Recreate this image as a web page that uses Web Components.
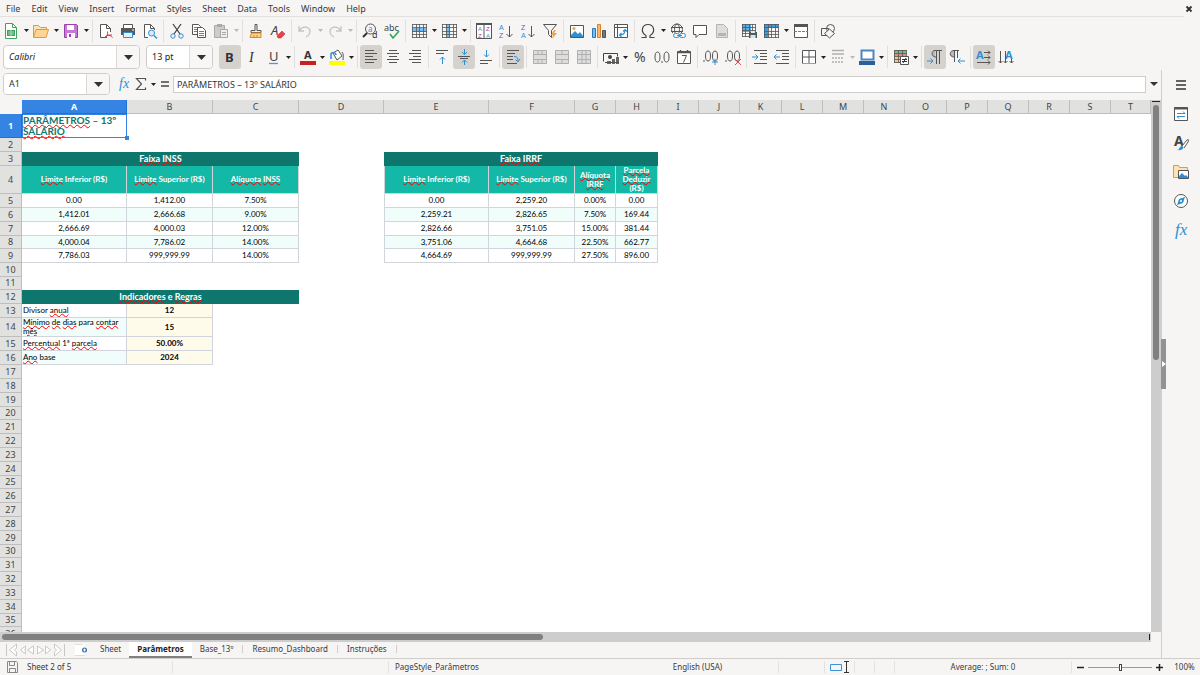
<!DOCTYPE html>
<html lang="en">
<head>
<meta charset="utf-8">
<title>Parâmetros – Calc</title>
<style>
  html, body { margin: 0; height: 100%; }
  body { background: #f6f5f4; color: #3a3a3a; font: 9px/12px "Noto Sans", sans-serif; overflow: hidden; }
</style>
</head>
<body>
<calc-app></calc-app>

<template id="t-app">
  <style>
    :host { display: flex; flex-direction: column; height: 100vh; }
    .middle { flex: 1; min-height: 0; display: flex; }
    .work { flex: 1; min-width: 0; display: flex; flex-direction: column; border-right: 1px solid #d0cfcd; }
    .format { height: 26px; --arrow: 7px; }
    calc-sheet { flex: 1; min-height: 0; }
  </style>
  <menu-bar></menu-bar>
  <tool-bar>
    <tool-button icon="new" label="New" menu></tool-button>
    <tool-button icon="open" label="Open" menu></tool-button>
    <tool-button icon="save" label="Save" menu></tool-button>
    <tool-sep></tool-sep>
    <tool-button icon="pdf" label="Export as PDF"></tool-button>
    <tool-button icon="print" label="Print"></tool-button>
    <tool-button icon="preview" label="Print Preview"></tool-button>
    <tool-sep></tool-sep>
    <tool-button icon="cut" label="Cut"></tool-button>
    <tool-button icon="copy" label="Copy"></tool-button>
    <tool-button icon="paste" label="Paste" menu disabled></tool-button>
    <tool-sep></tool-sep>
    <tool-button icon="clone" label="Clone Formatting"></tool-button>
    <tool-button icon="clear" label="Clear Direct Formatting"></tool-button>
    <tool-sep></tool-sep>
    <tool-button icon="undo" label="Undo" menu disabled></tool-button>
    <tool-button icon="redo" label="Redo" menu disabled></tool-button>
    <tool-sep></tool-sep>
    <tool-button icon="find" label="Find and Replace"></tool-button>
    <tool-button icon="spell" label="Spelling"></tool-button>
    <tool-sep></tool-sep>
    <tool-button icon="row" label="Row" menu></tool-button>
    <tool-button icon="column" label="Column" menu></tool-button>
    <tool-sep></tool-sep>
    <tool-button icon="sort" label="Sort"></tool-button>
    <tool-button icon="asc" label="Sort Ascending"></tool-button>
    <tool-button icon="desc" label="Sort Descending"></tool-button>
    <tool-button icon="filter" label="AutoFilter"></tool-button>
    <tool-sep></tool-sep>
    <tool-button icon="image" label="Insert Image"></tool-button>
    <tool-button icon="chart" label="Insert Chart"></tool-button>
    <tool-button icon="pivot" label="Insert Pivot Table"></tool-button>
    <tool-sep></tool-sep>
    <tool-button icon="omega" label="Special Character" menu></tool-button>
    <tool-button icon="link" label="Insert Hyperlink"></tool-button>
    <tool-button icon="comment" label="Insert Comment"></tool-button>
    <tool-button icon="header" label="Headers and Footers" disabled></tool-button>
    <tool-sep></tool-sep>
    <tool-button icon="range" label="Define Print Area"></tool-button>
    <tool-button icon="freeze" label="Freeze Rows and Columns" menu></tool-button>
    <tool-button icon="split" label="Split Window"></tool-button>
    <tool-sep></tool-sep>
    <tool-button icon="shapes" label="Show Draw Functions"></tool-button>
  </tool-bar>
  <tool-bar class="format">
    <combo-box class="font" label="Font Name" value="Calibri"></combo-box>
    <combo-box class="size" label="Font Size" value="13 pt"></combo-box>
    <tool-button icon="bold" label="Bold" active></tool-button>
    <tool-button icon="italic" label="Italic"></tool-button>
    <tool-button icon="underline" label="Underline" menu></tool-button>
    <tool-sep></tool-sep>
    <tool-button icon="color" label="Font Color" menu></tool-button>
    <tool-button icon="fill" label="Background Color" menu></tool-button>
    <tool-sep></tool-sep>
    <tool-button icon="left" label="Align Left" active></tool-button>
    <tool-button icon="center" label="Center Horizontally"></tool-button>
    <tool-button icon="right" label="Align Right"></tool-button>
    <tool-sep></tool-sep>
    <tool-button icon="top" label="Align Top"></tool-button>
    <tool-button icon="middle" label="Center Vertically" active></tool-button>
    <tool-button icon="bottom" label="Align Bottom"></tool-button>
    <tool-sep></tool-sep>
    <tool-button icon="wrap" label="Wrap Text" active></tool-button>
    <tool-sep></tool-sep>
    <tool-button icon="merge1" label="Merge and Center Cells" disabled></tool-button>
    <tool-button icon="merge2" label="Merge Cells" disabled></tool-button>
    <tool-button icon="merge3" label="Unmerge Cells" disabled></tool-button>
    <tool-sep></tool-sep>
    <tool-button icon="currency" label="Format as Currency" menu></tool-button>
    <tool-button icon="percent" label="Format as Percent"></tool-button>
    <tool-button icon="number" label="Format as Number"></tool-button>
    <tool-button icon="date" label="Format as Date"></tool-button>
    <tool-sep></tool-sep>
    <tool-button icon="adddec" label="Add Decimal Place"></tool-button>
    <tool-button icon="deldec" label="Delete Decimal Place"></tool-button>
    <tool-sep></tool-sep>
    <tool-button icon="indent" label="Increase Indent"></tool-button>
    <tool-button icon="outdent" label="Decrease Indent"></tool-button>
    <tool-sep></tool-sep>
    <tool-button icon="borders" label="Borders" menu></tool-button>
    <tool-button icon="bstyle" label="Border Style" menu disabled></tool-button>
    <tool-button icon="bcolor" label="Border Color" menu></tool-button>
    <tool-sep></tool-sep>
    <tool-button icon="cond" label="Conditional Formatting" menu></tool-button>
    <tool-sep></tool-sep>
    <tool-button icon="ltr" label="Left-To-Right" active></tool-button>
    <tool-button icon="rtl" label="Right-To-Left"></tool-button>
    <tool-sep></tool-sep>
    <tool-button icon="horiz" label="Text direction from left to right" active></tool-button>
    <tool-button icon="vert" label="Text direction from top to bottom"></tool-button>
  </tool-bar>
  <div class="middle">
    <div class="work">
      <formula-bar></formula-bar>
      <calc-sheet></calc-sheet>
      <sheet-tabs></sheet-tabs>
    </div>
    <side-bar></side-bar>
  </div>
  <status-bar></status-bar>
</template>

<template id="t-menu">
  <style>
    :host { display: flex; justify-content: space-between; align-items: center; height: 16px; margin-right: 16px; border-bottom: 1px solid #e2e1df; padding-left: 6px; }
    nav { display: flex; gap: 11px; padding-top: 1px; }
    button { all: unset; }
    .close { margin-right: -10px; width: 10px; height: 16px; }
    svg { display: block; margin: 5px 1px; }
  </style>
  <nav>
    <button>File</button><button>Edit</button><button>View</button><button>Insert</button><button>Format</button><button>Styles</button><button>Sheet</button><button>Data</button><button>Tools</button><button>Window</button><button>Help</button>
  </nav>
  <button class="close" aria-label="Close Document"><svg width="8" height="8" viewBox="0 0 8 8"><path d="M1.500 1.500L6.500 6.500M6.500 1.500L1.500 6.500" stroke="#333" stroke-width="1.900"/></svg></button>
</template>

<template id="t-toolbar">
  <style>
    :host { display: flex; align-items: center; height: 27px; }
    ::slotted(*) { flex: none; }
  </style>
  <slot></slot>
</template>

<template id="t-formula">
  <style>
    :host { display: flex; align-items: center; height: 30px; box-sizing: border-box; padding-bottom: 2px; }
    .name { display: flex; width: 105px; height: 20px; margin: 0 7px 0 3px; border: 1px solid #cfcdca; border-radius: 4px; background: #fff; overflow: hidden; }
    input { font: inherit; color: #333; border: 0; outline: 0; padding: 0 5px; min-width: 0; background: #fff; }
    .name input { flex: 1; }
    .name button { width: 23px; border-left: 1px solid #dcdad8; background: #f8f7f6; }
    button { all: unset; display: flex; align-items: center; justify-content: center; box-sizing: border-box; }
    .line { flex: 1; min-width: 0; height: 17px; box-sizing: border-box; border: 1px solid #cfcdca; padding: 0 3px; }
    .tool { width: 16px; height: 20px; }
    .small { width: 8px; }
    .eq { width: 16px; }
    .drop { width: 15px; }
  </style>
  <div class="name"><input aria-label="Name Box" value="A1"><button aria-label="Named ranges"><svg width="9" height="5"><path d="M0 0h9L4.500 5z" fill="#333"/></svg></button></div>
  <button class="tool" aria-label="Function Wizard"><calc-icon name="fx"></calc-icon></button>
  <button class="tool" aria-label="Select Function"><calc-icon name="sigma"></calc-icon></button>
  <button class="small" aria-label="More functions"><svg width="5" height="3"><path d="M0 0h5L2.500 3z" fill="#222"/></svg></button>
  <button class="eq" aria-label="Formula"><svg width="8" height="6"><path d="M0 1h8M0 5h8" stroke="#444" stroke-width="1.500"/></svg></button>
  <input class="line" aria-label="Input line" value="PARÂMETROS – 13º SALÁRIO">
  <button class="drop" aria-label="Expand Formula Bar"><svg width="8" height="4"><path d="M0 0h8L4 4z" fill="#333"/></svg></button>
</template>

<template id="t-sheet">
  <style>
    :host { display: grid; grid-template: minmax(0, 1fr) 10px / minmax(0, 1fr) 10px; background: #fff; }
    .view { overflow: hidden; }
    table { border-collapse: separate; border-spacing: 0; table-layout: fixed; width: 100%; min-width: 1111px; font-family: Lato, sans-serif; color: #000; }
    tr { height: 14px; }
    tr.short { height: 13px; }
    tr.title { height: 24px; }
    tr.heads { height: 27px; }
    tr.two { height: 18px; }
    th, td { padding: 0; box-sizing: border-box; overflow: hidden; }
    thead th, tbody th { font: 9px/10px "Noto Sans", sans-serif; color: #444; background: #e1e1e0; border-right: 1px solid #bebebd; border-bottom: 1px solid #bebebd; }
    thead th:first-child { background: #f6f5f4; border-color: #f6f5f4; }
    th.on, thead th.on { background: #3584e4; color: #fff; font-weight: bold; border-color: #1c71d8; }
    td { font-size: 8px; line-height: 9px; text-align: center; vertical-align: middle; }
    td.name { position: relative; overflow: visible; text-align: left; padding-left: 1px; color: #0f766e; font-size: 10px; line-height: 11px; font-weight: bold; outline: 1px solid #3584e4; outline-offset: -1px; }
    td.name::after { content: ""; position: absolute; right: -2px; bottom: -2px; width: 4px; height: 4px; background: #3584e4; }
    td.band { background: #0f766e; color: #fff; font-size: 9px; line-height: 10px; font-weight: bold; padding-bottom: 1px; }
    td.head { background: #14b8a6; color: #fff; font-weight: bold; }
    td.head, td.cell, td.key, td.val { border-right: 1px solid #d1d5db; border-bottom: 1px solid #d1d5db; }
    td.cell:nth-of-type(5), td.head:nth-of-type(5) { border-left: 1px solid #d1d5db; }
    td.key { text-align: left; padding-left: 1px; }
    td.val { background: #fffbeb; font-weight: bold; }
    td.alt { background: #f0fdfa; }
    u { text-decoration: underline wavy #f00 1px; text-decoration-skip-ink: none; text-underline-offset: 0; }
    .band u, .head u { text-underline-offset: -1px; }
    .v, .h { background: #cdcdcd; display: flex; }
    .v { flex-direction: column; align-items: center; }
    .h { align-items: center; }
    .h i { height: 6px; width: 47%; margin-left: 2px; }
    .v i { width: 6px; height: 48%; margin-top: 3px; }
    i { border-radius: 3px; background: #808080; }
    .v b { width: 8px; height: 1px; margin-top: 1px; background: #222; }
    .h b { margin: 0 1px 0 auto; width: 1px; height: 6px; background: #222; }
    .corner { background: #f6f5f4; }
  </style>
  <div class="view"><table><colgroup></colgroup><thead></thead><tbody></tbody></table></div>
  <div class="v"><b></b><i></i></div>
  <div class="h"><i></i><b></b></div>
  <div class="corner"></div>
</template>

<template id="t-tabs">
  <style>
    :host { display: flex; align-items: stretch; height: 16px; font-size: 8px; }
    button { all: unset; display: flex; align-items: center; }
    .nav { width: 60px; margin: 0 9px 0 6px; }
    .add { width: 17px; }
    .tab { padding: 0 8px; border-bottom: 2px solid transparent; height: 14px; }
    .tab.on { background: #fff; font-weight: bold; border-color: #808080; color: #222; }
    .bar { width: 1px; height: 8px; margin: 3px 1px; background: #cfcfcf; }
  </style>
  <button class="nav" aria-label="Scroll sheets"><svg width="60" height="14" viewBox="0 0 60 14" fill="#fff" stroke="#c9c8c6"><path d="M.5 1v12M3.500 7l7-6v4l-2 2 2 2v4zM14.500 7l5-4v3l-1 1 1 1v3zM21.500 7l6-4v8zM31.500 3l6 4-6 4zM39.500 3l5 4-5 4zM48.500 1l7 6-7 6V9l2-2-2-2zM58.500 1v12"/></svg></button>
  <button class="add" aria-label="Add Sheet"><svg width="14" height="14"><path d="M0 1.500h10v11H0z" fill="#fff"/><path d="M0 1.500h7M0 12.500h10" stroke="#ddd"/><circle cx="9.500" cy="7" r="2.500" fill="#2f72b8"/><path d="M8 7h3M9.500 5.500v3" stroke="#fff"/></svg></button>
  <button class="tab">Sheet</button>
  <button class="tab on">Parâmetros</button>
  <button class="tab">Base_13º</button><span class="bar"></span>
  <button class="tab">Resumo_Dashboard</button><span class="bar"></span>
  <button class="tab">Instruções</button><span class="bar"></span>
</template>

<template id="t-side">
  <style>
    :host { position: relative; display: flex; flex-direction: column; align-items: center; width: 38px; gap: 9px; padding-top: 5px; box-sizing: border-box; }
    button { all: unset; height: 20px; width: 20px; display: flex; align-items: center; justify-content: center; }
    .grip { position: absolute; left: -1px; top: 269px; width: 5px; height: 50px; background: #929292; }
  </style>
  <button aria-label="Sidebar Settings"><calc-icon name="burger"></calc-icon></button>
  <button aria-label="Properties"><calc-icon name="props"></calc-icon></button>
  <button aria-label="Styles"><calc-icon name="styles"></calc-icon></button>
  <button aria-label="Gallery"><calc-icon name="gallery"></calc-icon></button>
  <button aria-label="Navigator"><calc-icon name="navigator"></calc-icon></button>
  <button aria-label="Functions"><calc-icon name="fxbig"></calc-icon></button>
  <button class="grip" aria-label="Hide sidebar"><svg width="5" height="6"><path d="M1 0l4 3-4 3z" fill="#fff"/></svg></button>
</template>

<template id="t-status">
  <style>
    :host { display: grid; grid-template-columns: 172px 216fr 228fr 162fr 46px 30px 20px 20px 177fr 97px 32px; align-items: center; height: 16px; border-top: 1px solid #cfcdca; font-size: 8px; }
    div { display: flex; align-items: center; justify-content: center; gap: 4px; height: 12px; border-left: 1px solid #e3e2e0; box-sizing: border-box; white-space: nowrap; }
    .start { justify-content: flex-start; padding-left: 6px; }
    .first { gap: 8px; }
    .plain { border-color: transparent; }
    button { all: unset; display: flex; }
    input { appearance: none; width: 64px; height: 10px; margin: 0; background: linear-gradient(#999, #999) center / 100% 1px no-repeat; }
    input::-webkit-slider-thumb { appearance: none; width: 3px; height: 7px; box-sizing: border-box; border: 1px solid #444; background: #fff; }
  </style>
  <div class="start first plain"><svg width="12" height="12" viewBox="0 0 12 12" fill="none" stroke="#888"><path d="M.5 .5h9l1 1v10H.500zM2.500 .5v4h5v-4M2.500 11.500v-4h6v4"/></svg><span>Sheet 2 of 5</span></div>
  <div></div>
  <div class="start">PageStyle_Parâmetros</div>
  <div class="plain">English (USA)</div>
  <div></div>
  <div><svg width="20" height="12" viewBox="0 0 20 12" fill="none"><path d="M.5 3.500h11v6H.5z" stroke="#3a93d6"/><path d="M14 .5h5M14 11.500h5M16.500 .5v11" stroke="#333"/></svg></div>
  <div></div>
  <div></div>
  <div>Average: ; Sum: 0</div>
  <div><button aria-label="Zoom Out"><svg width="7" height="7"><path d="M0 3.500h7" stroke="#222" stroke-width="1.500"/></svg></button><input type="range" aria-label="Zoom" value="50"><button aria-label="Zoom In"><svg width="7" height="7"><path d="M0 3.500h7M3.500 0v7" stroke="#222" stroke-width="1.500"/></svg></button></div>
  <div class="plain">100%</div>
</template>

<script>
const lines = (rows, c = '#555') => `<path stroke="${c}" d="${rows.map(([x, y, w]) => `M${x} ${y}.5h${w}`).join('')}"/>`;
const grid = (x, y, w, h, nx, ny) => {
  let d = '';
  for (let i = 0; i <= nx; i++) d += `M${x + .5 + Math.round(i * w / nx)} ${y}v${h + 1}`;
  for (let i = 0; i <= ny; i++) d += `M${x} ${y + .5 + Math.round(i * h / ny)}h${w + 1}`;
  return `<path d="${d}" stroke="#555" stroke-width=".8"/>`;
};
const glyph = (x, y, s, t, c, extra = '') => `<text x="${x}" y="${y}" font-size="${s}" fill="${c}" stroke="none" ${extra}>${t}</text>`;
const BLUE = '#2f8fd3', PURPLE = '#a33fb8', ARIAL = 'font-family="Liberation Sans"';
const ICONS = {
  new: `<path d="M2.500 .5h7l4 4v11h-11z" fill="#fff" stroke="#3fa45b"/><path d="M9.500 .5v4h4" stroke="#3fa45b"/><path d="M4 7h8v6H4z" fill="#3fa45b"/><path d="M5 9h6M5 11h6M8 7v6" stroke="#cfe9d6" stroke-width=".7"/>`,
  open: `<path d="M.5 14.500v-12h5l2 2h6v3" fill="#fbe3b4" stroke="#e29a3b"/><path d="M.5 14.500l2.500-8h12.500l-2.500 8z" fill="#ffd596" stroke="#e29a3b"/>`,
  save: `<path d="M1.500 1.500h12l1 1v12h-13z" fill="#c877d4" stroke="#9a3fae"/><path d="M4 2h7v5H4z" fill="#fff"/><path d="M4 15v-5h8v5z" fill="#fff"/><path d="M6 11h2v3H6z" fill="#9a3fae"/>`,
  pdf: `<path d="M9 14.500H2.500V1.500h6l4 4V9" fill="#fff" stroke="#555"/><path d="M8.500 1.500v4h4" stroke="#555"/><path d="M7 15c2-1 3-4 2.500-6.500M9 12c2 0 5 1 5.500 2.500M7 14c2-2 5-2 7-2" stroke="#e0344a"/>`,
  print: `<path d="M3.500 5V1.500h9V5" fill="#fff" stroke="#555"/><path d="M1 5h14v7H1z" fill="#585858"/><path d="M3.500 9.500h9v5h-9z" fill="#e7f2fb" stroke="${BLUE}"/><path d="M12 7h2" stroke="#fff"/>`,
  preview: `<path d="M6 14.500H2.500V1.500h6l4 4V7" fill="#fff" stroke="#555"/><path d="M8.500 1.500v4h4" stroke="#555"/><circle cx="9.500" cy="10" r="3" fill="#d8ecfa" stroke="${BLUE}"/><path d="M12 12.500l3 3" stroke="${BLUE}" stroke-width="1.500"/>`,
  cut: `<path d="M4 1l7 10M12 1L5 11" stroke="#444" stroke-width="1.300"/><circle cx="4" cy="13" r="2.200" stroke="${BLUE}"/><circle cx="12" cy="13" r="2.200" stroke="${BLUE}"/>`,
  copy: `<path d="M1.500 1.500h6l2 2v8h-8z" fill="#fff" stroke="#555"/><path d="M3 4.500h5M3 6.500h5M3 8.500h5" stroke="${BLUE}"/><path d="M6.500 4.500h5l3 3v7h-8z" fill="#fff" stroke="#555"/><path d="M8 8.500h5M8 10.500h5M8 12.500h5" stroke="${BLUE}"/>`,
  paste: `<path d="M1.500 2.500h10v12h-10z" fill="#ccc" stroke="#aaa"/><path d="M4 1h5v3H4z" fill="#aaa"/><path d="M7.500 6.500h7v8h-7z" fill="#eee" stroke="#aaa"/><path d="M9 9.500h4M9 11.500h4" stroke="#aaa"/>`,
  clone: `<path d="M7 1.500h2v6h4v2H3v-2h4z" fill="#eee" stroke="#555"/><path d="M3.500 10h9.500v4.500h-11z" fill="#ffd18a" stroke="#e08a1e"/><path d="M6 12v3M9 12v3" stroke="#e08a1e"/>`,
  clear: glyph(1, 12, 13, 'A', '#444', 'font-style="italic"') + `<path d="M7 13l5-5 3 3-4 4H8z" fill="#e8434c" stroke="#b8262f" stroke-width=".5"/>`,
  undo: `<path d="M2 3v5h5M2.500 7.500C5 3 12 3 13 8c0 3-2 5-4 6" stroke="#c4c3c1" stroke-width="1.300"/>`,
  redo: `<path d="M14 3v5H9M13.500 7.500C11 3 4 3 3 8c0 3 2 5 4 6" stroke="#c4c3c1" stroke-width="1.300"/>`,
  find: `<circle cx="8.500" cy="6" r="5" stroke="#555"/><path d="M5 10l-4 4" stroke="#333" stroke-width="2"/>` + glyph(6, 9, 8, 'a', BLUE) + glyph(10, 15, 9, 'd', '#333'),
  spell: glyph(0, 8, 9, 'abc', '#444') + `<path d="M6 11l3 4 6-7" stroke="#33a852" stroke-width="1.600"/>`,
  row: `<path d="M1 5h14v4H1z" fill="#79bdf0"/>` + grid(1, 1, 14, 13, 4, 4),
  column: `<path d="M5 1h4v14H5z" fill="#79bdf0"/>` + grid(1, 1, 14, 13, 4, 4),
  sort: `<path d="M.5 .5h15v15H.5zM8 1v15" fill="#fff" stroke="#555"/><path d="M0 1h16" stroke="#555" stroke-width="2"/>` + glyph(2, 8, 6, 'A', BLUE, ARIAL) + glyph(2, 15, 6, 'Z', PURPLE, ARIAL) + glyph(10, 8, 6, 'Z', PURPLE, ARIAL) + glyph(10, 15, 6, 'A', BLUE, ARIAL),
  asc: glyph(1, 7, 7, 'A', BLUE, ARIAL) + glyph(1, 15, 7, 'Z', PURPLE, ARIAL) + `<path d="M11.500 3v11M8.500 11l3 3 3-3" stroke="#555"/>`,
  desc: glyph(1, 7, 7, 'Z', PURPLE, ARIAL) + glyph(1, 15, 7, 'A', BLUE, ARIAL) + `<path d="M11.500 3v11M8.500 11l3 3 3-3" stroke="#555"/>`,
  filter: `<path d="M1.500 1.500h13l-5 6v7l-3-3v-4z" stroke="#555"/><path d="M12 7l-3 5h2l-1 4 5-6h-3l2-3z" fill="#f5a142"/>`,
  image: `<path d="M1.500 2.500h13v12h-13z" fill="#fff" stroke="#555"/><path d="M2 14v-2l4-4 3 3 2-2 3 4v1z" fill="${BLUE}"/><circle cx="5" cy="5.500" r="1.500" fill="#f5a142"/>`,
  chart: `<path d="M1.500 5.500h3v9h-3z" fill="#79bdf0" stroke="#2a7ab8"/><path d="M6.500 1.500h3v13h-3z" fill="#f8b868" stroke="#d9822b"/><path d="M11.500 7.500h3v7h-3z" fill="#777" stroke="#555"/>`,
  pivot: `<path d="M1.500 1.500h13v13h-13zM2 4.500h12M4.500 2v12" fill="#fff" stroke="#555"/><path d="M7 12c3 0 5-2 5-5M10 8.500l2-2 2 2M8.500 10l-2 2 2 2" stroke="${BLUE}" stroke-width="1.200"/>`,
  omega: `<path d="M1.500 14.500H6v-2C0 9 2 1.500 8 1.500s8 7.500 2 11v2h4.500" stroke="#444" stroke-width="1.200"/>`,
  link: `<circle cx="7" cy="6.500" r="5.500" stroke="#555"/><ellipse cx="7" cy="6.500" rx="2.500" ry="5.500" stroke="#555"/><path d="M1 4.500h12M1 8.500h12" stroke="#555"/><path d="M3 10h13v6H3z" fill="#f6f5f4"/><rect x="3.500" y="10.500" width="6" height="4" rx="2" stroke="${BLUE}"/><rect x="9.500" y="10.500" width="6" height="4" rx="2" stroke="${BLUE}"/><path d="M7 12.500h5" stroke="${BLUE}"/>`,
  comment: `<path d="M1.500 2.500h13v9H7l-3 3v-3H1.500z" fill="#fff" stroke="#555"/>`,
  header: `<path d="M2.500 1.500h7l4 4v9h-11z" fill="#ddd" stroke="#b5b5b5"/><path d="M4 10h8v3H4z" fill="#b5b5b5"/>`,
  range: `<path d="M1 1h9v8H1z" fill="#5aaee8"/>` + grid(1, 1, 13, 12, 4, 4) + `<path d="M8 9h8v6H8z" fill="#585858"/><path d="M10 8h4v2h-4zM9.500 12h5v3h-5z" fill="#cfe8fa"/>`,
  freeze: `<path d="M1 1h4v14H1zM1 1h14v4H1z" fill="#3d9be0"/>` + grid(1, 1, 14, 13, 4, 4),
  split: `<path d="M1.500 1.500h13v13h-13z" fill="#fff" stroke="#555"/><path d="M1 2.500h14" stroke="#555" stroke-width="3"/><path d="M1 8.500h14" stroke="${BLUE}" stroke-dasharray="3 1"/>`,
  shapes: `<path d="M1.500 5.500h7v7h-7z" stroke="#555"/><circle cx="10.500" cy="5.500" r="4" stroke="#555"/><path d="M9.500 6l5 4.500-5 4.500-5-4.500z" fill="#f6f5f4" stroke="#555"/>`,
  bold: glyph(3, 13, 13, 'B', '#333', 'font-weight="bold"'),
  italic: glyph(5, 13, 14, 'I', '#333', 'font-style="italic" font-family="Liberation Serif"'),
  underline: glyph(3, 12, 13, 'U', '#444') + `<path d="M3 14.500h9" stroke="#4a9be0" stroke-width="1.300"/>`,
  color: glyph(4, 10, 11, 'A', '#333', 'font-weight="bold"') + `<path d="M0 12h16v4H0z" fill="#c9211e"/>`,
  fill: `<path d="M4 4l5-3 4 6-5 4z" fill="#fff" stroke="#555"/><path d="M2 10V5c0-2 5-2 5 1" stroke="${BLUE}" stroke-width="1.500"/><path d="M13 3c2 2 1 5 1 8" stroke="#555"/><path d="M0 12h16v4H0z" fill="#ffff00"/>`,
  left: lines([[2, 1, 9], [2, 4, 12], [2, 7, 8], [2, 10, 12], [2, 13, 9]]),
  center: lines([[4, 1, 8], [2, 4, 12], [4, 7, 8], [2, 10, 12], [4, 13, 8]]),
  right: lines([[5, 1, 9], [2, 4, 12], [6, 7, 8], [2, 10, 12], [5, 13, 9]]),
  top: lines([[2, 1, 12], [2, 4, 8]]) + `<path d="M8.500 15V8M6 10.500L8.500 8l2.500 2.500" stroke="${BLUE}"/>`,
  middle: lines([[2, 7, 12], [4, 9, 8]]) + `<path d="M8.500 0v5M6 3l2.500 2.500L11 3M8.500 16v-5M6 13.500l2.500-2.500 2.500 2.500" stroke="${BLUE}"/>`,
  bottom: lines([[2, 11, 12], [2, 14, 8]]) + `<path d="M8.500 1v7M6 5.500L8.500 8 11 5.500" stroke="${BLUE}"/>`,
  wrap: lines([[2, 1, 12], [2, 4, 8], [2, 7, 6], [2, 10, 6], [2, 14, 10]]) + `<path d="M9 7.500c3 0 4 1 4 5M10.500 10.500l2.500 2.500 2-3" stroke="${BLUE}"/>`,
  merge1: `<path d="M1.500 1.500h13v13h-13zM1 5.500h14M1 10.500h14M6 2v4M10 2v4M6 11v4M10 11v4" fill="#ddd" stroke="#b0b0b0"/>`,
  merge2: `<path d="M1.500 1.500h13v13h-13zM1 5.500h14M1 10.500h14M8 2v4M8 11v4" fill="#ddd" stroke="#b0b0b0"/>`,
  merge3: `<path d="M1.500 1.500h13v13h-13zM1 5.500h14M1 10.500h14M6 2v13M10 2v13" fill="#ddd" stroke="#b0b0b0"/>`,
  currency: `<path d="M.5 12.500v-8h14v3" stroke="#444"/><circle cx="7" cy="8" r="2" fill="#444"/><path d="M4 12h4v3H4zM9 10h3v5H9zM13 8h3v7h-3z" fill="#666"/><path d="M2 13.500h14" stroke="#555"/>`,
  percent: glyph(2, 13, 14, '%', '#444'),
  number: `<g stroke="#555"><ellipse cx="3.500" cy="8" rx="2.500" ry="5"/><ellipse cx="12.500" cy="8" rx="2.500" ry="5"/><path d="M8 12v2"/></g>`,
  date: `<path d="M1.500 2.500h13v12h-13z" fill="#fff" stroke="#555"/><path d="M1 3.500h14M4.500 1v3M11.500 1v3" stroke="#555" stroke-width="1.500"/><path d="M6 6.500h4.500l-3 7" stroke="#555"/>`,
  adddec: `<g stroke="#555"><ellipse cx="5" cy="7" rx="2.500" ry="5"/><ellipse cx="12" cy="7" rx="2.500" ry="5"/><path d="M1 11v2"/></g><path d="M9 13h6M12 10v6" stroke="${BLUE}"/>`,
  deldec: `<g stroke="#555"><ellipse cx="5" cy="7" rx="2.500" ry="5"/><ellipse cx="12" cy="7" rx="2.500" ry="5"/><path d="M1 11v2"/></g><path d="M10 10l6 6M16 10l-6 6" stroke="#e8434c"/>`,
  indent: lines([[2, 1, 13], [8, 4, 7], [8, 7, 7], [8, 10, 7], [2, 14, 13]]) + `<path d="M0 8h6M3.500 5.500L6 8l-2.500 2.500" stroke="${BLUE}"/>`,
  outdent: lines([[2, 1, 13], [8, 4, 7], [8, 7, 7], [8, 10, 7], [2, 14, 13]]) + `<path d="M0 8h6M2.500 5.500L0 8l2.500 2.500" stroke="${BLUE}"/>`,
  borders: `<path d="M1.500 1.500h13v13h-13zM8 2v12M2 8h12" fill="#fff" stroke="#555"/><path d="M1 14.500h14" stroke="#d9904a"/>`,
  bstyle: `<path d="M2 1.500h12M2 5h12" stroke="#b0b0b0" stroke-width="1.500"/><path d="M2 9h12M2 13h12" stroke="#b0b0b0" stroke-width="1.500" stroke-dasharray="2 1"/>`,
  bcolor: `<path d="M2.500 1.500h12v9h-12z" fill="#fff" stroke="#4a87c2" stroke-width="2"/><path d="M0 12h16v4H0z" fill="#2a6099"/>`,
  cond: `<path d="M1 1h12v3H1z" fill="#6cc08b"/><path d="M1 4h12v3H1z" fill="#e88b7d"/><path d="M1 7h6v7H1z" fill="#f5c68a"/>` + grid(1, 1, 12, 12, 3, 4) + `<path d="M7.500 7.500h8v8h-8z" fill="#fff" stroke="#555"/><path d="M9 10.500h5M9 12.500h5M13 9l-3 5" stroke="#333"/>`,
  ltr: `<path d="M8 1.500C4 1.500 4 8 8 8z" fill="#bbb"/><path d="M9.500 15V1.500M12.500 15V1.500M15 1.500H8C4 1.500 4 8 9 8" stroke="#555"/><path d="M0 12h6M3.500 9.500L6 12l-2.500 2.500" stroke="${BLUE}"/>`,
  rtl: `<path d="M5 1.500C0 1.500 0 8 5 8z" fill="#bbb"/><path d="M5.500 13V1.500M8.500 9V1.500M10 1.500H5C0 1.500 0 8 5 8" stroke="#555"/><path d="M16 12H9M11.500 9.500L9 12l2.500 2.500" stroke="${BLUE}"/>`,
  horiz: glyph(0, 10, 11, 'A', BLUE, 'font-weight="bold"') + `<path d="M8 3.500h6M12 1.500l2 2-2 2M8 8.500h6M12 6.500l2 2-2 2M1 13.500h13M12 11.500l2 2-2 2" stroke="#555"/>`,
  vert: glyph(7, 10, 11, 'A', BLUE, 'font-weight="bold"') + `<path d="M2.500 2v12M.5 12l2 2 2-2M7.500 2v12M5.500 12l2 2 2-2M13.500 10v4M11.500 12l2 2 2-2" stroke="#555"/>`,
  fx: glyph(2, 12, 14, 'fx', BLUE, 'font-style="italic" font-family="Liberation Serif"'),
  fxbig: glyph(2, 13, 17, 'fx', BLUE, 'font-style="italic" font-family="Liberation Serif"'),
  sigma: `<path d="M12.500 4.500V2.500h-9l5 5.500-5 5.500h9v-2" stroke="#555" stroke-width="1.200"/>`,
  burger: `<path d="M3 4h10M3 8h10M3 12h10" stroke="#333" stroke-width="1.600"/>`,
  props: `<path d="M1.500 1.500h13v13h-13z" fill="#fff" stroke="#555"/><path d="M1 2.500h14" stroke="#555" stroke-width="2"/><path d="M4 7.500h8l-2-2M12 10.500H4l2 2" stroke="${BLUE}"/>`,
  styles: glyph(1, 11, 14, 'A', '#444', 'font-weight="bold"') + `<path d="M9 11l5-6c2-1 2 0 1 2l-4 6" fill="#fff" stroke="#555"/><path d="M4 15c3 0 2-4 5-4 3 1 1 5-5 4z" fill="${BLUE}"/>`,
  gallery: `<path d="M.5 13.500v-12h5l1 2h8v10z" fill="#fbe3b4" stroke="#e29a3b"/><path d="M5.500 6.500h10v8h-10z" fill="#fff" stroke="#555"/><path d="M6 14v-2l3-3 3 3 1-1 2 2v1z" fill="${BLUE}"/>`,
  navigator: `<circle cx="8" cy="8" r="6.500" fill="#fff" stroke="#555"/><path d="M12 4l-2 6-6 2 2-6z" fill="${BLUE}"/><circle cx="8" cy="8" r="1" fill="#fff"/>`
};

const fromTemplate = id => class extends HTMLElement {
  constructor() {
    super();
    this.attachShadow({ mode: 'open' }).append(document.getElementById(id).content.cloneNode(true));
  }
};

customElements.define('calc-icon', class extends HTMLElement {
  connectedCallback() {
    if (this.shadowRoot) return;
    this.attachShadow({ mode: 'open' }).innerHTML =
      `<style>:host{display:block;width:16px;height:16px}svg{display:block;overflow:visible}</style>
       <svg width="16" height="16" viewBox="0 0 16 16" fill="none" aria-hidden="true">${ICONS[this.getAttribute('name')]}</svg>`;
  }
});

customElements.define('tool-button', class extends HTMLElement {
  connectedCallback() {
    if (this.shadowRoot) return;
    const label = this.getAttribute('label'), off = this.hasAttribute('disabled') ? 'disabled' : '';
    this.attachShadow({ mode: 'open' }).innerHTML = `<style>
      :host { display: flex; height: 24px; }
      button { all: unset; display: flex; align-items: center; justify-content: center; width: 22px; }
      .menu { width: var(--arrow, 8px); color: #222; }
      .menu:disabled { color: #bbb; }
      :host([active]) button { background: #d5d2ce; border-radius: 3px; }
      </style><button aria-label="${label}" ${off}><calc-icon name="${this.getAttribute('icon')}"></calc-icon></button>` +
      (this.hasAttribute('menu') ? `<button class="menu" aria-label="${label} options" ${off}><svg width="5" height="3"><path d="M0 0h5L2.500 3z" fill="currentColor"/></svg></button>` : '');
  }
});

customElements.define('tool-sep', class extends HTMLElement {
  connectedCallback() {
    if (this.shadowRoot) return;
    this.attachShadow({ mode: 'open' }).innerHTML = '<style>:host{display:block;width:1px;height:22px;margin:0 2px;background:#e0dfdd}</style>';
  }
});

customElements.define('combo-box', class extends HTMLElement {
  connectedCallback() {
    if (this.shadowRoot) return;
    this.attachShadow({ mode: 'open' }).innerHTML = `<style>
      :host { position: relative; display: flex; height: 22px; border: 1px solid #cfcdca; border-radius: 4px; background: #fff; box-sizing: content-box; overflow: hidden; }
      :host(.font) { width: 135px; margin: 0 6px 0 3px; font-style: italic; }
      :host(.size) { width: 65px; margin-right: 6px; }
      select { appearance: none; border: 0; outline: 0; background: transparent; font: inherit; color: #222; width: 100%; padding: 0 5px; }
      span { position: absolute; right: 0; top: 0; bottom: 0; width: 22px; display: flex; align-items: center; justify-content: center; border-left: 1px solid #dcdad8; background: #f8f7f6; pointer-events: none; }
      </style><select aria-label="${this.getAttribute('label')}"><option>${this.getAttribute('value')}</option></select>
      <span><svg width="9" height="5"><path d="M0 0h9L4.500 5z" fill="#333"/></svg></span>`;
  }
});

customElements.define('menu-bar', fromTemplate('t-menu'));
customElements.define('tool-bar', fromTemplate('t-toolbar'));
customElements.define('formula-bar', fromTemplate('t-formula'));
customElements.define('sheet-tabs', fromTemplate('t-tabs'));
customElements.define('side-bar', fromTemplate('t-side'));
customElements.define('status-bar', fromTemplate('t-status'));

/* Words between tildes get the spell-checker's wavy underline. */
const marked = s => s.replace(/~([^~]+)~/g, '<u>$1</u>');
const cell = (cls, text, span = 1) => `<td class="${cls}" colspan="${span}"><div>${marked(text)}</div></td>`;
const gap = n => n ? `<td colspan="${n}"></td>` : '';
const band = (a, b) => cell('band', a, 3) + (b ? gap(1) + cell('band', b, 4) + gap(12) : gap(17));
const data = (cls, v) => v.slice(0, 3).map(t => cell(cls, t)).join('') + gap(1) + v.slice(3).map(t => cell(cls, t)).join('') + gap(12);
const rule = (k, v, alt) => cell(alt ? 'key alt' : 'key', k) + cell('val', v) + gap(18);
const ROWS = {
  1: cell('name', '~PARÂMETROS~ – 13º ~SALÁRIO~') + gap(19),
  3: band('~Faixa~ ~INSS~', '~Faixa~ ~IRRF~'),
  4: data('head', ['~Limite~ Inferior (R$)', '~Limite~ Superior (R$)', '~Alíquota~ ~INSS~', '~Limite~ Inferior (R$)', '~Limite~ Superior (R$)', '~Alíquota~ ~IRRF~', '~Parcela~ ~Deduzir~ (R$)']),
  5: data('cell', ['0.00', '1,412.00', '7.50%', '0.00', '2,259.20', '0.00%', '0.00']),
  6: data('cell alt', ['1,412.01', '2,666.68', '9.00%', '2,259.21', '2,826.65', '7.50%', '169.44']),
  7: data('cell', ['2,666.69', '4,000.03', '12.00%', '2,826.66', '3,751.05', '15.00%', '381.44']),
  8: data('cell alt', ['4,000.04', '7,786.02', '14.00%', '3,751.06', '4,664.68', '22.50%', '662.77']),
  9: data('cell', ['7,786.03', '999,999.99', '14.00%', '4,664.69', '999,999.99', '27.50%', '896.00']),
  12: band('~Indicadores~ e ~Regras~'),
  13: rule('Divisor ~anual~', '12'),
  14: rule('~Mínimo~ ~de~ ~dias~ para ~contar~ ~mês~', '15', true),
  15: rule('~Percentual~ 1ª ~parcela~', '50.00%'),
  16: rule('~Ano~ base', '2024', true)
};
const SIZES = { 1: 'title', 4: 'heads', 14: 'two', 8: 'short', 11: 'short', 20: 'short', 25: 'short', 30: 'short', 35: 'short' };
const WIDTHS = [22, 105, 86, 86, 85, 105, 86, 41, 42, 41, 41, 42, 41, 41, 41, 42, 41, 41, 41, 41];

customElements.define('calc-sheet', class extends fromTemplate('t-sheet') {
  constructor() {
    super();
    const $ = s => this.shadowRoot.querySelector(s);
    $('colgroup').innerHTML = WIDTHS.map(w => `<col style="width:${w}px">`).join('') + '<col>';
    $('thead').innerHTML = '<tr><th></th>' + [...'ABCDEFGHIJKLMNOPQRST'].map(c => `<th scope="col"${c === 'A' ? ' class="on"' : ''}>${c}</th>`).join('') + '</tr>';
    let body = '';
    for (let r = 1; r <= 36; r++)
      body += `<tr class="${SIZES[r] || ''}"><th scope="row"${r === 1 ? ' class="on"' : ''}>${r}</th>${ROWS[r] || gap(20)}</tr>`;
    $('tbody').innerHTML = body;
  }
});

customElements.define('calc-app', fromTemplate('t-app'));
</script>
</body>
</html>
